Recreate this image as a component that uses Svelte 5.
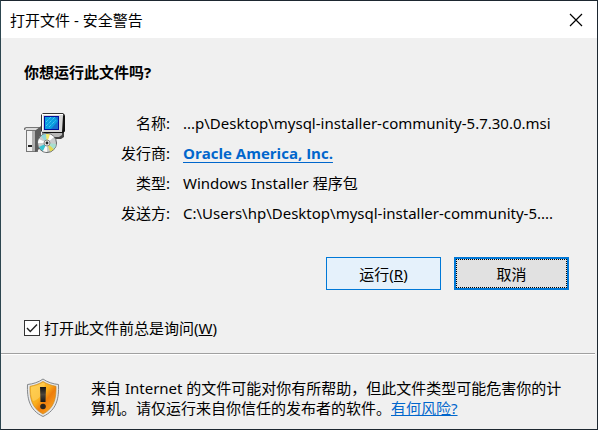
<script>
  let alwaysAsk = $state(true);

  const folder = '\\Desktop\\mysql-installer-community-5.';
  const details = [
    { label: '名称:', value: '...p' + folder + '7.30.0.msi' },
    { label: '发行商:', value: 'Oracle America, Inc.', link: true },
    { label: '类型:', value: 'Windows Installer 程序包' },
    { label: '发送方:', value: 'C:\\Users\\hp' + folder + '...' }
  ];
</script>

<div class="dialog" role="dialog" aria-labelledby="title">
  <header>
    <span id="title">打开文件 - 安全警告</span>
    <button class="close" aria-label="关闭">
      <svg width="14" height="14" viewBox="0 0 14 14" aria-hidden="true">
        <path d="M1 1L13 13M13 1L1 13" stroke="#000" stroke-width="1.2" fill="none" />
      </svg>
    </button>
  </header>

  <main>
    <h1>你想运行此文件吗?</h1>

    <section class="file">
      <svg class="installer" width="42" height="42" viewBox="0 0 42 42" aria-hidden="true">
        <path d="M18 20H40V25L37 27H20Z" fill="#444" />
        <path d="M19 21H38V23L35 25H21Z" fill="#b8b8b8" />
        <path d="M2 15H17L14 18V40H2V18H0V16Z" fill="#777" />
        <path d="M2 16H15L12 18H1Z" fill="#dcdcdc" />
        <path d="M3 19H9V39H3Z" fill="#f2f2f2" />
        <path d="M8 19H11V39H8Z" fill="#b0b0b0" />
        <path d="M11 19L17 14V35L12 40H11Z" fill="#5c5c5c" />
        <path d="M4 33H8V35H4Z" fill="#222" />
        <path d="M17 3L19 1H39L41 3V19L39 21H19L17 19Z" fill="#333" />
        <path d="M18 2H39V20H18Z" fill="#d8d8d8" />
        <path d="M18 2H39V3H19V19H18Z" fill="#fff" />
        <path d="M20 4H35V18H20Z" fill="#04109c" />
        <path d="M21 5H34V17H21Z" fill="#0b9fe0" />
        <path d="M31 5H34V17H27L34 9Z" fill="#176fce" />
        <path d="M22 14L31 5M22 10L27 5M25 15L32 8" stroke="#7be6ff" stroke-width="0.8" stroke-dasharray="1 1" />
        <path d="M39 4H41V19L39 21H20V20H38Z" fill="#111" />
        <circle cx="23" cy="31" r="9.5" fill="#c9cccc" stroke="#626666" />
        <path d="M23 31L17 24A9 9 0 0 1 22 22Z" fill="#8fd8dc" />
        <path d="M23 31L22 22A9 9 0 0 1 26 22.5Z" fill="#f5e967" />
        <path d="M23 31L26 22.5A9 9 0 0 1 30 25Z" fill="#fff" />
        <path d="M23 31L14 31A9 9 0 0 1 15 27Z" fill="#fff" />
        <path d="M23 31L15 35A9 9 0 0 0 19 39Z" fill="#38c3d2" />
        <path d="M23 31L19 39A9 9 0 0 0 23 40Z" fill="#f8f8f8" />
        <path d="M23 31L26 39.5A9 9 0 0 0 30 37Z" fill="#e2d94f" />
        <path d="M23 31L30 37A9 9 0 0 0 32 32Z" fill="#a7dfcf" />
        <circle cx="23" cy="31" r="3" fill="#eee" stroke="#888" />
        <circle cx="23" cy="31" r="1.4" fill="#222" />
      </svg>

      <dl>
        {#each details as { label, value, link }}
          <dt>{label}</dt>
          <dd>
            {#if link}<a class="publisher" href="#publisher">{value}</a>{:else}{value}{/if}
          </dd>
        {/each}
      </dl>
    </section>

    <div class="actions">
      <button class="run">运行(<u>R</u>)</button>
      <button class="cancel"><span>取消</span></button>
    </div>

    <label class="ask" for="ask">
      <span class="box">
        <input id="ask" type="checkbox" bind:checked={alwaysAsk} />
        {#if alwaysAsk}
          <svg width="16" height="16" viewBox="0 0 16 16" aria-hidden="true">
            <path d="M3 8L6.3 11.5L13 4.5" fill="none" stroke="#222" stroke-width="1.4" />
          </svg>
        {/if}
      </span>
      <span>打开此文件前总是询问(<u>W</u>)</span>
    </label>
  </main>

  <footer>
    <svg class="shield" width="34" height="40" viewBox="0 0 34 40" aria-hidden="true">
      <defs>
        <linearGradient id="gold" x1="0" y1="0" x2="1" y2="1">
          <stop offset="0" stop-color="#ffc83a" />
          <stop offset="0.45" stop-color="#f9ad1c" />
          <stop offset="0.6" stop-color="#ee7d0b" />
          <stop offset="1" stop-color="#ffb52b" />
        </linearGradient>
        <linearGradient id="mark" x1="0" y1="0" x2="0" y2="1">
          <stop offset="0" stop-color="#111" />
          <stop offset="0.5" stop-color="#4c443a" />
          <stop offset="1" stop-color="#161616" />
        </linearGradient>
      </defs>
      <path d="M17 1C13 4 7 6 1.500 6.500C1 20 3 32 17 38.500C31 32 33 20 32.500 6.500C27 6 21 4 17 1Z" fill="#e6e8ea" stroke="#85888b" />
      <path d="M17 3.500C13 6 8.500 7.500 4 8.300C3.700 20 5.500 30 17 36C28.500 30 30.300 20 30 8.300C25.500 7.500 21 6 17 3.500Z" fill="url(#gold)" stroke="#c8871c" stroke-width="0.7" />
      <path d="M17 4.500C13 7 9 8.200 5 9C4.800 14 5 19 7 23C13 22 18 16 19 5.500Z" fill="#ffdc72" opacity="0.5" />
      <path d="M14 9H20L19.500 24H14.500Z" fill="url(#mark)" />
      <circle cx="17" cy="28.500" r="2.800" fill="#2b251e" />
    </svg>
    <p>
      来自 Internet 的文件可能对你有所帮助，但此文件类型可能危害你的计算机。请仅运行来自你信任的发布者的软件。<a href="#risk">有何风险?</a>
    </p>
  </footer>
</div>

<style>
  :global(body) {
    margin: 0;
    background: #f0f0f0;
  }

  .dialog {
    box-sizing: border-box;
    min-height: 100vh;
    border: 1px solid #1d2730;
    border-left-color: #2d4650;
    background: #f0f0f0;
    color: #000;
    font: 15px/20px "Noto Sans", "Noto Sans CJK SC", sans-serif;
  }

  header {
    display: flex;
    align-items: center;
    justify-content: space-between;
    height: 37px;
    padding: 0 14px 0 9px;
    background: #fff;
  }

  button {
    font: inherit;
    color: inherit;
    padding: 0;
  }

  .close {
    display: flex;
    border: 0;
    background: none;
  }

  main {
    padding: 24px 28px 15px 23px;
  }

  h1 {
    margin: 0;
    font-size: 15px;
    line-height: 20px;
    font-weight: 700;
  }

  .file {
    display: flex;
    margin-top: 26px;
  }

  .installer {
    flex: none;
    margin-top: 4px;
  }

  dl {
    display: grid;
    grid-template-columns: 104px 1fr;
    grid-auto-rows: 30px;
    column-gap: 13px;
    margin: 0;
    line-height: 30px;
    white-space: nowrap;
  }

  dt {
    text-align: right;
  }

  dd {
    margin: 0;
  }

  a {
    color: #0066cc;
  }

  .publisher {
    font-family: "Open Sans", sans-serif;
    font-weight: 700;
    text-underline-offset: 3px;
  }

  .actions {
    display: flex;
    justify-content: flex-end;
    gap: 13px;
    margin-top: 29px;
  }

  .actions button {
    box-sizing: border-box;
    width: 115px;
    height: 33px;
  }

  .run {
    border: 1px solid #0078d7;
    background: #e5f1fb;
  }

  .actions .cancel {
    display: grid;
    border: 2px solid #0078d7;
    background: #e1e1e1;
  }

  .cancel span {
    display: grid;
    place-items: center;
    border: 1px dotted #000;
  }

  .ask {
    display: flex;
    align-items: center;
    gap: 4px;
    margin-top: 28px;
  }

  .box {
    display: grid;
    width: 16px;
    height: 16px;
  }

  .box > :global(*) {
    grid-area: 1 / 1;
  }

  .box input {
    appearance: none;
    box-sizing: border-box;
    width: 16px;
    height: 16px;
    margin: 0;
    border: 1px solid #333;
    background: #fff;
  }

  .box svg {
    pointer-events: none;
  }

  footer {
    display: flex;
    gap: 31px;
    margin-right: 2px;
    padding: 24px 28px 10px 25px;
    border-top: 1px solid #a0a0a0;
    box-shadow: inset 0 1px #fff;
  }

  .shield {
    flex: none;
  }

  p {
    margin: 0;
  }
</style>
